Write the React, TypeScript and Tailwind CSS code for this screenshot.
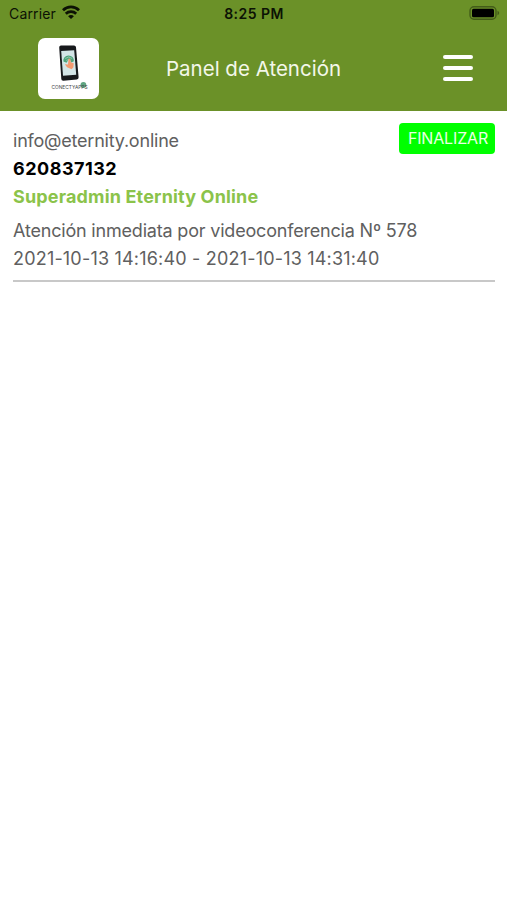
interface Appointment {
  email: string;
  phone: string;
  agent: string;
  description: string;
  start: string;
  end: string;
}

const appointments: Appointment[] = [
  {
    email: 'info@eternity.online',
    phone: '620837132',
    agent: 'Superadmin Eternity Online',
    description: 'Atención inmediata por videoconferencia Nº 578',
    start: '2021-10-13 14:16:40',
    end: '2021-10-13 14:31:40',
  },
];

function WifiIcon() {
  return (
    <svg className="w-[18px] h-[14px] -mt-[3px]" viewBox="0 0 18 14" fill="none" stroke="#0c1204" strokeWidth="2.8">
      <path d="M1 5.2C5.6.8 12.4.8 17 5.2" />
      <path d="M3.8 8.7c2.9-2.7 7.5-2.7 10.4 0" />
      <path d="M6.1 11.2c1.6-1.5 4.2-1.5 5.8 0L9 14Z" fill="#0c1204" stroke="none" />
    </svg>
  );
}

function BatteryIcon() {
  return (
    <svg className="w-[31px] h-[14px] -mt-px" viewBox="0 0 31 14">
      <rect x="1" y=".8" width="26" height="12.4" rx="4" fill="none" stroke="#435c19" strokeWidth="1.4" />
      <rect x="3" y="2.8" width="22" height="8.4" rx="1.5" fill="#000" />
      <path d="M28.5 4.8c2.2.8 2.2 3.6 0 4.4Z" fill="#435c19" />
    </svg>
  );
}

function StatusBar() {
  return (
    <div className="grid grid-cols-3 items-center h-[27px] pl-[8px] pr-[7px] text-[14px] text-[#0c1204]">
      <div className="flex items-center gap-[6px] pl-px">
        <span className="tracking-[0.15px]">Carrier</span>
        <WifiIcon />
      </div>
      <span className="text-center font-semibold tracking-[0.45px]">8:25 PM</span>
      <div className="flex justify-end">
        <BatteryIcon />
      </div>
    </div>
  );
}

function Logo() {
  return (
    <svg className="w-[61px] h-[61px] rounded-[7px] bg-white" viewBox="0 0 61 61">
      <path d="M23 7.5h13q1.8 0 2 1.8l2.6 30q.1 2-1.8 2.2l-13.4 1.3q-2 .1-2.1-1.8L21.2 9.5Q21.1 7.6 23 7.5Z" fill="#17191c" />
      <path d="m23.2 13 13-.7 2 24.4-13.2 1Z" fill="#d3e5e7" />
      <path d="M25.4 23.6a5.3 5.3 0 1 1 10.5-.4l-2.5 1.2-2.4-3.5-2.5 3.8Z" fill="#4fa57c" />
      <path d="M27.2 20.5q3.5-3 7 0M28.3 22.5q2.3-2 4.8 0" fill="none" stroke="#a9d5c0" strokeWidth=".7" />
      <path d="m30.6 20.5 1.7.3.4 3.5 3 .9-.3 4-1.8 2-4.5-2-2.3-3 3.2.2Z" fill="#f49a70" />
      <circle cx="45.4" cy="47" r="2.9" fill="#5fa582" />
      <text x="13.5" y="51.3" textLength="36" lengthAdjust="spacingAndGlyphs" fontSize="5.2" fill="#45494b">
        CONECTYAPPS
      </text>
    </svg>
  );
}

function Header() {
  return (
    <header className="h-[111px] bg-[#6b9128]">
      <StatusBar />
      <div className="grid grid-cols-[68px_1fr_72px] items-center h-[82px] pl-[38px] pr-[34px]">
        <Logo />
        <h1 className="mt-[3px] text-center text-[20.5px] font-normal text-[#f3f7e9]">Panel de Atención</h1>
        <button aria-label="Menú" className="flex flex-col gap-[7px] w-[30px] justify-self-end">
          <span className="h-1 rounded-sm bg-white" />
          <span className="h-1 rounded-sm bg-white" />
          <span className="h-1 rounded-sm bg-white" />
        </button>
      </div>
    </header>
  );
}

function AppointmentRow({ appointment }: { appointment: Appointment }) {
  return (
    <article className="flex items-start justify-between border-b-2 border-[#c8c8c8] pb-[7px] text-[18px] leading-7 text-[#606060]">
      <div className="whitespace-nowrap pt-1 w-0">
        <p className="tracking-[-0.21px]">{appointment.email}</p>
        <p className="font-bold tracking-[0.5px] text-black">{appointment.phone}</p>
        <p className="font-bold tracking-[0.16px] text-[#8bc34a]">{appointment.agent}</p>
        <p className="mt-[6px] tracking-[-0.19px]">{appointment.description}</p>
        <p className="tracking-[0.19px]">
          {appointment.start} - {appointment.end}
        </p>
      </div>
      <button className="h-[31px] w-[96px] shrink-0 rounded-[4px] bg-[#00ff00] pl-[2px] text-[16px] leading-[31px] tracking-[-0.15px] text-[#e9ffe5]">
        FINALIZAR
      </button>
    </article>
  );
}

export default function App() {
  return (
    <div className="min-h-screen bg-white font-['Inter',sans-serif]">
      <Header />
      <main className="pl-[13px] pr-3 pt-3">
        {appointments.map((appointment) => (
          <AppointmentRow key={appointment.phone} appointment={appointment} />
        ))}
      </main>
    </div>
  );
}
